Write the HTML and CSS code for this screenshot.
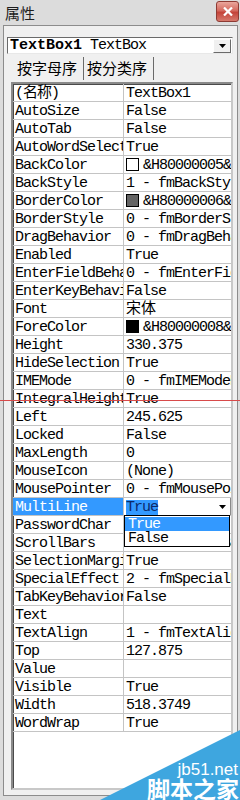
FILE: index.html
```html
<!DOCTYPE html>
<html lang="zh-CN">
<head>
    <meta charset="UTF-8">
    <title>属性</title>
    <link rel="stylesheet" href="styles.css">
</head>
<body>
<div class="window">
    <div class="titlebar">
        <span class="title">属性</span>
        <span class="close">
            <svg width="10" height="9" viewBox="0 0 10 9"><path d="M1 0.5L9 8.5M9 0.5L1 8.5" stroke="#fff" stroke-width="2.2"/></svg>
        </span>
    </div>
    <div class="pane">
        <div class="combo">
            <span class="combo-text"><b>TextBox1</b> TextBox</span>
            <span class="combo-btn"><svg width="7" height="4"><polygon points="0,0 7,0 3.5,4" fill="#000"/></svg></span>
        </div>
        <div class="tabs">
            <span class="tab tab-on">按字母序</span>
            <span class="tab">按分类序</span>
        </div>
        <div class="grid">
            <div class="row"><span class="name">(名称)</span><span class="val">TextBox1</span></div>
            <div class="row"><span class="name">AutoSize</span><span class="val">False</span></div>
            <div class="row"><span class="name">AutoTab</span><span class="val">False</span></div>
            <div class="row"><span class="name">AutoWordSelect</span><span class="val">True</span></div>
            <div class="row"><span class="name">BackColor</span><span class="val"><i class="swatch sw-white"></i>&amp;H80000005&amp;</span></div>
            <div class="row"><span class="name">BackStyle</span><span class="val">1 - fmBackStyleOpaque</span></div>
            <div class="row"><span class="name">BorderColor</span><span class="val"><i class="swatch sw-grey"></i>&amp;H80000006&amp;</span></div>
            <div class="row"><span class="name">BorderStyle</span><span class="val">0 - fmBorderStyleNone</span></div>
            <div class="row"><span class="name">DragBehavior</span><span class="val">0 - fmDragBehaviorDisabled</span></div>
            <div class="row"><span class="name">Enabled</span><span class="val">True</span></div>
            <div class="row"><span class="name">EnterFieldBehavior</span><span class="val">0 - fmEnterFieldBehaviorSelectAll</span></div>
            <div class="row"><span class="name">EnterKeyBehavior</span><span class="val">False</span></div>
            <div class="row"><span class="name">Font</span><span class="val cjk">宋体</span></div>
            <div class="row"><span class="name">ForeColor</span><span class="val"><i class="swatch sw-black"></i>&amp;H80000008&amp;</span></div>
            <div class="row"><span class="name">Height</span><span class="val">330.375</span></div>
            <div class="row"><span class="name">HideSelection</span><span class="val">True</span></div>
            <div class="row"><span class="name">IMEMode</span><span class="val">0 - fmIMEModeNoControl</span></div>
            <div class="row"><span class="name">IntegralHeight</span><span class="val">True</span></div>
            <div class="row"><span class="name">Left</span><span class="val">245.625</span></div>
            <div class="row"><span class="name">Locked</span><span class="val">False</span></div>
            <div class="row"><span class="name">MaxLength</span><span class="val">0</span></div>
            <div class="row"><span class="name">MouseIcon</span><span class="val">(None)</span></div>
            <div class="row"><span class="name">MousePointer</span><span class="val">0 - fmMousePointerDefault</span></div>
            <div class="row row-sel">
                <span class="name">MultiLine</span>
                <span class="val val-edit"><span class="hilite">True</span><span class="edit-btn"><svg width="7" height="4"><polygon points="0,0 7,0 3.5,4" fill="#000"/></svg></span></span>
                <div class="droplist">
                    <div class="item item-on">True</div>
                    <div class="item">False</div>
                </div>
            </div>
            <div class="row"><span class="name">PasswordChar</span><span class="val"></span></div>
            <div class="row"><span class="name">ScrollBars</span><span class="val">2 - fmScrollBarsVertical</span></div>
            <div class="row"><span class="name">SelectionMargin</span><span class="val">True</span></div>
            <div class="row"><span class="name">SpecialEffect</span><span class="val">2 - fmSpecialEffectSunken</span></div>
            <div class="row"><span class="name">TabKeyBehavior</span><span class="val">False</span></div>
            <div class="row"><span class="name">Text</span><span class="val"></span></div>
            <div class="row"><span class="name">TextAlign</span><span class="val">1 - fmTextAlignLeft</span></div>
            <div class="row"><span class="name">Top</span><span class="val">127.875</span></div>
            <div class="row"><span class="name">Value</span><span class="val"></span></div>
            <div class="row"><span class="name">Visible</span><span class="val">True</span></div>
            <div class="row"><span class="name">Width</span><span class="val">518.3749</span></div>
            <div class="row"><span class="name">WordWrap</span><span class="val">True</span></div>
        </div>
    </div>
</div>

<!-- 截图里的红色参考线和水印 -->
<div class="redline"></div>
<div class="mark">
    <span class="mark-url">jb51.net</span>
    <span class="mark-name">脚本之家</span>
</div>
</body>
</html>
```

FILE: styles.css
```css
*{ margin:0; padding:0; box-sizing:border-box;}
body{ width:240px; height:800px; overflow:hidden; position:relative; background:#dcdcdc;}

.window{ height:800px; display:flex; flex-direction:column; padding:0 2px 4px 3px; background:#dcdcdc;}
.titlebar{ height:25px; display:flex; align-items:center; justify-content:space-between; padding-left:2px;}
.title{ font:15px/20px "Noto Sans CJK SC",sans-serif; color:#1e1e1e;}
.close{ width:23px; height:21px; margin-top:-2px; margin-right:-1px; border:1px solid #8e3b34; border-radius:3px;
    background:linear-gradient(#eaa69c,#d46a5f 45%,#c4443a 55%,#d6796c); display:flex; align-items:center; justify-content:center;}

.pane{ flex:1; display:flex; flex-direction:column; background:#f0f0f0; border:1px solid #8c8c8c; padding:11px 4px 4px 3px;}

.combo{ height:17px; display:flex; align-items:center; justify-content:space-between; background:#fff;
    border:1px solid; border-color:#6a6a6a #e8e8e8 #e8e8e8 #6a6a6a; padding-left:2px;}
.combo-text{ font:15px/15px "Liberation Mono",monospace; letter-spacing:-1px; color:#000; white-space:nowrap;}
.combo-text b{ letter-spacing:0;}
.combo-btn{ width:18px; height:14px; margin-right:1px; background:#f0f0f0; border:1px solid; border-color:#fff #6a6a6a #6a6a6a #fff;
    display:flex; align-items:center; justify-content:center;}

.tabs{ height:28px; display:flex; align-items:flex-end; padding:0 0 2px 6px;}
.tab{ height:23px; font:15px/22px "Noto Sans CJK SC",sans-serif; color:#000; padding:0 6px 0 3px; border-right:1px solid #6a6a6a;}
.tab-on{ padding-left:4px;}

.grid{ flex:1; margin:0 0 1px 4px; background:#fff; border:2px solid; border-color:#8a8a8a #c8c8c8 #c8c8c8 #8a8a8a;
    box-shadow:inset 1px 1px 0 #4a4a4a;}
.row{ height:18px; display:flex; border-bottom:1px solid #c4c4c4; position:relative;
    font:15px/17px "Liberation Mono","Noto Sans CJK SC",monospace; letter-spacing:-1px; color:#000;}
.name{ width:111px; flex:none; padding:2px 0 0 2px; line-height:15px; border-right:1px solid #c4c4c4; overflow:hidden; white-space:nowrap;}
.val{ flex:1; padding:2px 0 0 2px; line-height:15px; overflow:hidden; white-space:nowrap; display:flex; align-items:center;}
.cjk{ letter-spacing:0;}
.swatch{ width:13px; height:13px; border:1px solid #000; margin:-2px 4px 0 0; flex:none;}
.sw-white{ background:#fff;}
.sw-grey{ background:#646464;}
.sw-black{ background:#000;}

.row-sel{ z-index:2;}
.row-sel .name{ background:#3399ff; color:#fff;}
.val-edit{ justify-content:space-between; padding-top:1px;}
.hilite{ background:#3399ff; color:#0c2a6a; line-height:15px;}
.edit-btn{ width:16px; height:17px; margin-top:-1px; border-right:1px solid #8a8a8a; display:flex; align-items:center; justify-content:center;}

.droplist{ position:absolute; left:111px; top:17px; width:106px; background:#fff; border:1px solid #000; padding:1px 0;}
.item{ height:14px; font:15px/15px "Liberation Mono",monospace; padding-left:3px;}
.item-on{ background:#3399ff; color:#fff;}

.redline{ position:absolute; left:0; top:400px; width:240px; height:1px; background:#d84a4a;}
.mark{ position:absolute; right:0; bottom:0; width:140px; height:70px; background:#3ea6df;
    clip-path:polygon(100% 0,100% 100%,0 100%);}
.mark-url{ position:absolute; right:2px; top:33px; font:17px/14px "Liberation Sans",sans-serif; color:#fff;}
.mark-name{ position:absolute; right:1px; bottom:1px; font:bold 23px/22px "Noto Sans CJK SC",sans-serif; color:#fff;}
```
